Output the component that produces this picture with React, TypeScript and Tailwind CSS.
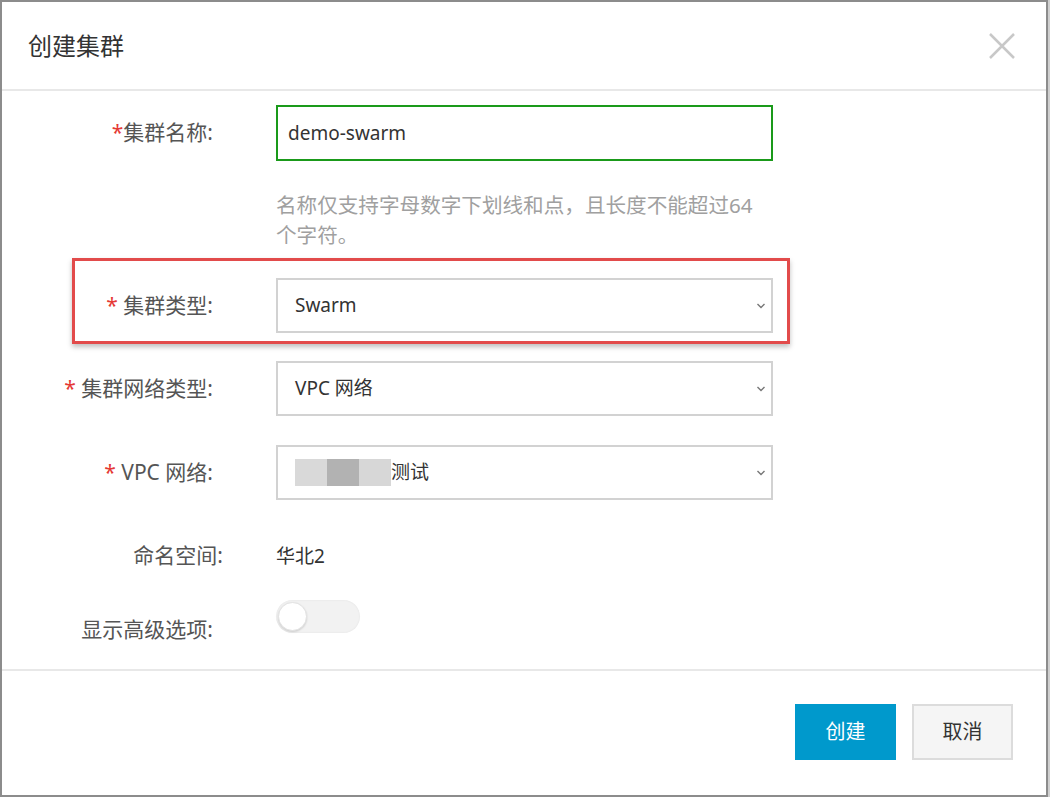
import React from "react";

const font = { fontFamily: '"Noto Sans", "Noto Sans CJK SC", sans-serif' };

const Label: React.FC<{ text: string; spaced?: boolean; required?: boolean; className?: string }> = ({
  text,
  spaced,
  required,
  className = "",
}) => (
  <div className={`w-[211px] shrink-0 text-right text-[21px] text-[#555] ${className}`}>
    {required && <span className="text-[#e53935]">{spaced ? "* " : "*"}</span>}
    {text}:
  </div>
);

const Chevron = () => (
  <svg width="10" height="7" viewBox="0 0 10 7" className="absolute right-[5px] top-1/2 -translate-y-1/2">
    <path d="M1.5 1.5 L5 5 L8.5 1.5" fill="none" stroke="#777" strokeWidth="1.4" />
  </svg>
);

const Select: React.FC<{ children: React.ReactNode }> = ({ children }) => (
  <div className="relative ml-[63px] flex h-[55px] w-[497px] items-center border-2 border-[#d2d2d2] bg-white pl-[17px] text-[19px] text-[#333]">
    {children}
    <Chevron />
  </div>
);

export default function App() {
  return (
    <div className="h-[797px] w-[1050px] bg-[#cfcfcf]" style={font}>
      <div className="flex h-[797px] w-[1048px] flex-col border-2 border-[#8c8c8c] bg-white">
        {/* header */}
        <div className="flex h-[89px] shrink-0 items-center justify-between border-b-2 border-[#e8e8e8] pl-[26px] pr-[30px]">
          <h1 className="text-[24px] text-[#333]">创建集群</h1>
          <svg width="28" height="28" viewBox="0 0 28 28">
            <path d="M2 2 L26 26 M26 2 L2 26" stroke="#c8c8c8" strokeWidth="2.5" />
          </svg>
        </div>

        {/* body */}
        <div className="flex flex-1 flex-col pt-[14px]">
          <div className="flex items-center">
            <Label text="集群名称" required />
            <div className="ml-[63px] flex h-[56px] w-[497px] items-center border-2 border-[#1a9a1a] pl-[10px] text-[19px] text-[#333]">
              demo-swarm
            </div>
          </div>
          <p className="ml-[274px] mt-[29px] w-[487px] text-[20.6px] leading-[30px] text-[#a0a0a0]">
            名称仅支持字母数字下划线和点，且长度不能超过64个字符。
          </p>

          <div className="relative mt-[28px] flex items-center">
            <Label text="集群类型" required spaced />
            <Select>Swarm</Select>
            <div className="pointer-events-none absolute left-[70px] top-[-20px] h-[86px] w-[718px] border-[3px] border-[#e24b4b] shadow-[0_3px_5px_rgba(0,0,0,0.25)]" />
          </div>

          <div className="mt-[28px] flex items-center">
            <Label text="集群网络类型" required spaced />
            <Select>VPC 网络</Select>
          </div>

          <div className="mt-[29px] flex items-center">
            <Label text="VPC 网络" required spaced />
            <Select>
              <span className="flex h-[27px]">
                <span className="w-[32px] bg-[#d9d9d9]" />
                <span className="w-[32px] bg-[#b2b2b2]" />
                <span className="w-[32px] bg-[#d7d7d7]" />
              </span>
              <span>测试</span>
            </Select>
          </div>

          <div className="mt-[41px] flex h-[30px] items-center">
            <Label text="命名空间" className="translate-x-[10px]" />
            <div className="ml-[63px] text-[19px] text-[#333]">华北2</div>
          </div>

          <div className="mt-[29px] flex h-[42px] items-end">
            <div className="w-[211px] shrink-0 text-right text-[21px] leading-[26px] text-[#555]">
              显示高级选项:
            </div>
            <div className="ml-[63px] flex h-[33px] w-[84px] items-center self-start rounded-full bg-[#f2f2f2] px-[2px] shadow-[inset_0_0_2px_rgba(0,0,0,0.08)]">
              <div className="h-[29px] w-[29px] rounded-full border border-[#e2e2e2] bg-white shadow-[0_1px_2px_rgba(0,0,0,0.15)]" />
            </div>
          </div>
        </div>

        {/* footer */}
        <div className="flex h-[126px] shrink-0 items-start justify-end gap-[16px] border-t-2 border-[#e8e8e8] pr-[33px] pt-[33px]">
          <button className="h-[56px] w-[101px] bg-[#0099cc] text-[20px] text-white">创建</button>
          <button className="h-[56px] w-[101px] border-2 border-[#dcdcdc] bg-[#f5f5f5] text-[20px] text-[#333]">
            取消
          </button>
        </div>
      </div>
    </div>
  );
}
